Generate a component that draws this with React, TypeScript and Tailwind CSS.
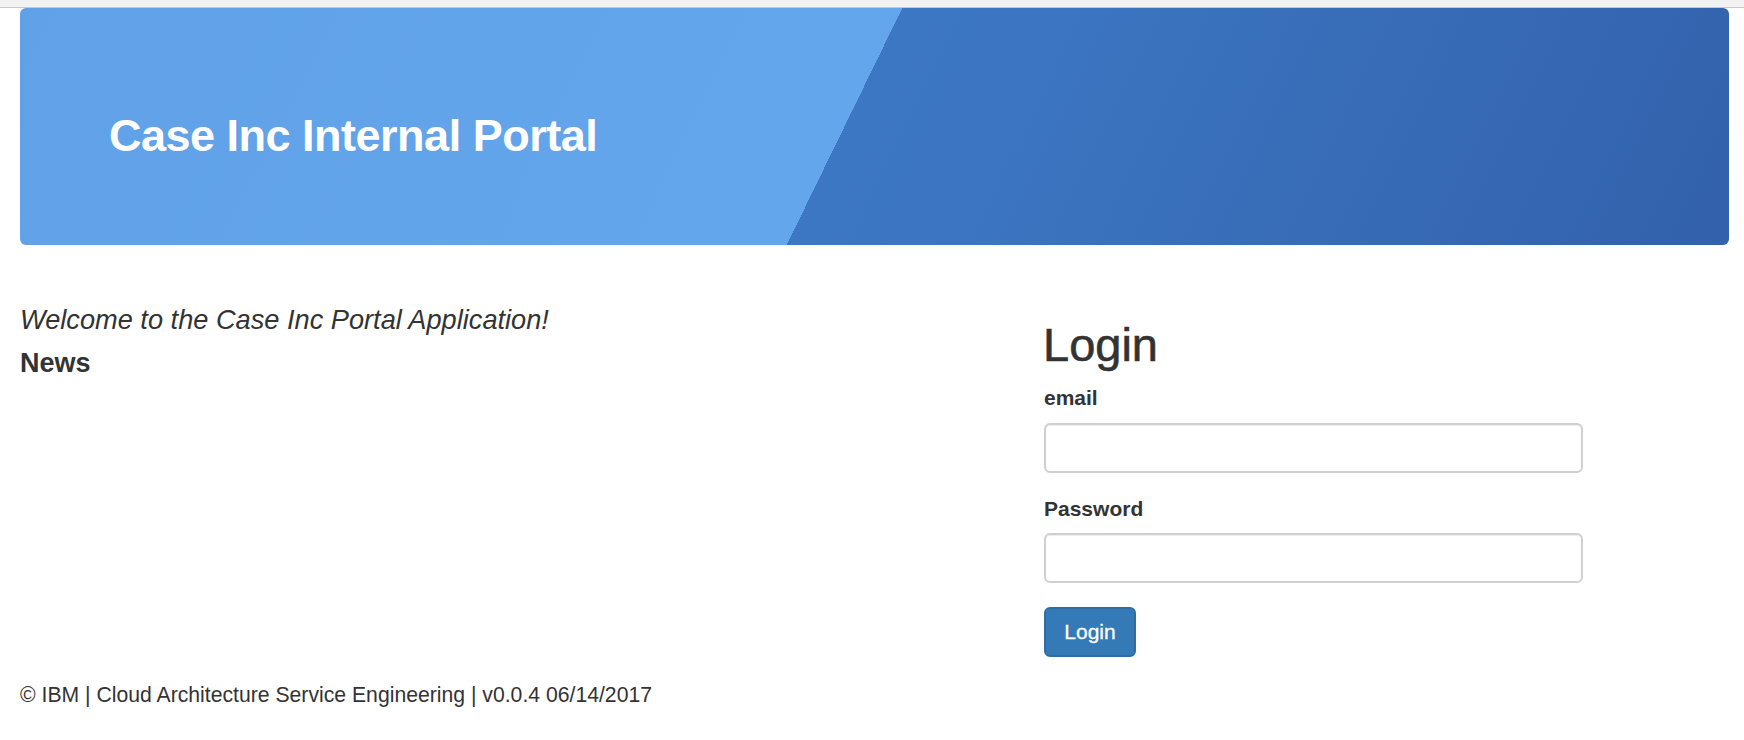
export default function App() {
  return (
    <div className="min-h-[740px] bg-white font-['Liberation_Sans',Arial,sans-serif] text-[#333333]">
      {/* browser edge */}
      <div className="h-[8px] border-b border-[#c9c9c9] bg-[#f2f2f2]" />

      <div className="pl-[20px] pr-[15px]">
        {/* Banner */}
        <div className="h-[237px] rounded-[6px] bg-[linear-gradient(116deg,#60a1e8_0px,#64a6ec_793px,transparent_793px),linear-gradient(116deg,#4180cc_0%,#3c76c2_55%,#3361ab_100%)] pl-[89px] pt-[105px]">
          <h1 className="text-[45px] leading-none font-bold tracking-[-0.5px] text-white">
            Case Inc Internal Portal
          </h1>
        </div>

        {/* Content */}
        <div className="mt-[60px] grid grid-cols-[1024px_1fr]">
          <div>
            <p className="text-[27.2px] leading-[30px] italic">Welcome to the Case Inc Portal Application!</p>
            <h4 className="mt-[13px] text-[27px] leading-[30px] font-bold">News</h4>
          </div>

          <div className="pt-[15px]">
            <h2 className="-ml-[1px] text-[47px] leading-[50px] [-webkit-text-stroke:0.6px_#333333]">Login</h2>
            <form className="w-[539px]" onSubmit={(e) => e.preventDefault()}>
              <label className="mt-[13px] block text-[21px] leading-[30px] font-bold">email</label>
              <input
                type="email"
                className="mt-[10px] block h-[50px] w-full rounded-[6px] border-2 border-[#d0d0d0] bg-white px-[18px] text-[21px] shadow-[inset_0_1px_1px_rgba(0,0,0,0.075)] outline-none"
              />
              <label className="mt-[21px] block text-[21px] leading-[30px] font-bold">Password</label>
              <input
                type="password"
                className="mt-[9px] block h-[50px] w-full rounded-[6px] border-2 border-[#d0d0d0] bg-white px-[18px] text-[21px] shadow-[inset_0_1px_1px_rgba(0,0,0,0.075)] outline-none"
              />
              <button
                type="submit"
                className="mt-[24px] flex h-[50px] w-[92px] items-center justify-center rounded-[6px] border-2 border-[#2e6da4] bg-[#337ab7] text-[21px] leading-[30px] text-white [-webkit-text-stroke:0.3px_#ffffff]"
              >
                Login
              </button>
            </form>
          </div>
        </div>

        {/* Footer */}
        <footer className="mt-[23px] text-[21.2px] leading-[30px]">
          © IBM | Cloud Architecture Service Engineering | v0.0.4 06/14/2017
        </footer>
      </div>
    </div>
  );
}
